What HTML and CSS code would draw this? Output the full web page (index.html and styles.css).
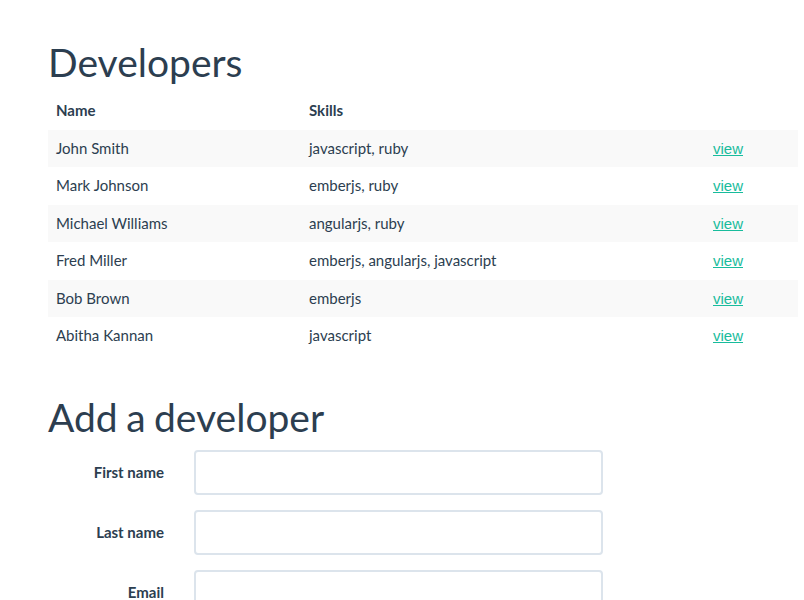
FILE: index.html
```html
<!DOCTYPE html>
<html>
<head>
<meta charset="utf-8">
<link rel="stylesheet" href="styles.css">
</head>
<body>
<div class="container">
  <h1 class="title">Developers</h1>
  <table class="devs">
    <thead>
      <tr><th class="c-name">Name</th><th class="c-skills">Skills</th><th class="c-act"></th></tr>
    </thead>
    <tbody>
      <tr><td>John Smith</td><td>javascript, ruby</td><td><a href="#" class="view">view</a></td></tr>
      <tr><td>Mark Johnson</td><td>emberjs, ruby</td><td><a href="#" class="view">view</a></td></tr>
      <tr><td>Michael Williams</td><td>angularjs, ruby</td><td><a href="#" class="view">view</a></td></tr>
      <tr><td>Fred Miller</td><td>emberjs, angularjs, javascript</td><td><a href="#" class="view">view</a></td></tr>
      <tr><td>Bob Brown</td><td>emberjs</td><td><a href="#" class="view">view</a></td></tr>
      <tr><td>Abitha Kannan</td><td>javascript</td><td><a href="#" class="view">view</a></td></tr>
    </tbody>
  </table>

  <h1 class="title title-add">Add a developer</h1>
  <form class="dev-form">
    <div class="field">
      <label class="field-label" for="fn">First name</label>
      <input class="field-input" id="fn" type="text">
    </div>
    <div class="field">
      <label class="field-label" for="ln">Last name</label>
      <input class="field-input" id="ln" type="text">
    </div>
    <div class="field">
      <label class="field-label" for="em">Email</label>
      <input class="field-input" id="em" type="text">
    </div>
  </form>
</div>
</body>
</html>
```

FILE: styles.css
```css
html, body {
  margin: 0;
  padding: 0;
  background: #ffffff;
}

body {
  font-family: Lato, "Liberation Sans", sans-serif;
  font-size: 15px;
  line-height: 1.42857;
  color: #2c3e50;
  overflow: hidden;
}

.container {
  width: 750px;
  padding: 20px 0 0 48px;
}

.title {
  font-size: 39px;
  font-weight: 400;
  line-height: 1.1;
  margin: 21px 0 8.5px 0;
}

.title-add {
  margin-top: 42px;
  word-spacing: -1.5px;
}

.devs {
  width: 750px;
  border-collapse: collapse;
  border-spacing: 0;
  margin-bottom: 0;
}

.devs th,
.devs td {
  padding: 8px;
  text-align: left;
  vertical-align: top;
  line-height: 21.43px;
}

.devs th {
  font-weight: 700;
}

.c-name { width: 237px; }
.c-skills { width: 388px; }

.devs tbody tr:nth-child(odd) {
  background: #f9f9f9;
}

.view {
  font-family: "Liberation Sans", Arial, sans-serif;
  color: #18bc9c;
  text-decoration: underline;
}

.dev-form {
  margin-top: 11px;
}

.field {
  display: flex;
  align-items: center;
  gap: 30px;
  margin-bottom: 15px;
}

.field-label {
  width: 116px;
  text-align: right;
  font-weight: 700;
}

.field-input {
  box-sizing: border-box;
  width: 409px;
  height: 45px;
  border: 2px solid #dce4ec;
  border-radius: 4px;
  background: #fff;
  padding: 10px 15px;
  font: inherit;
  outline: none;
}
```
